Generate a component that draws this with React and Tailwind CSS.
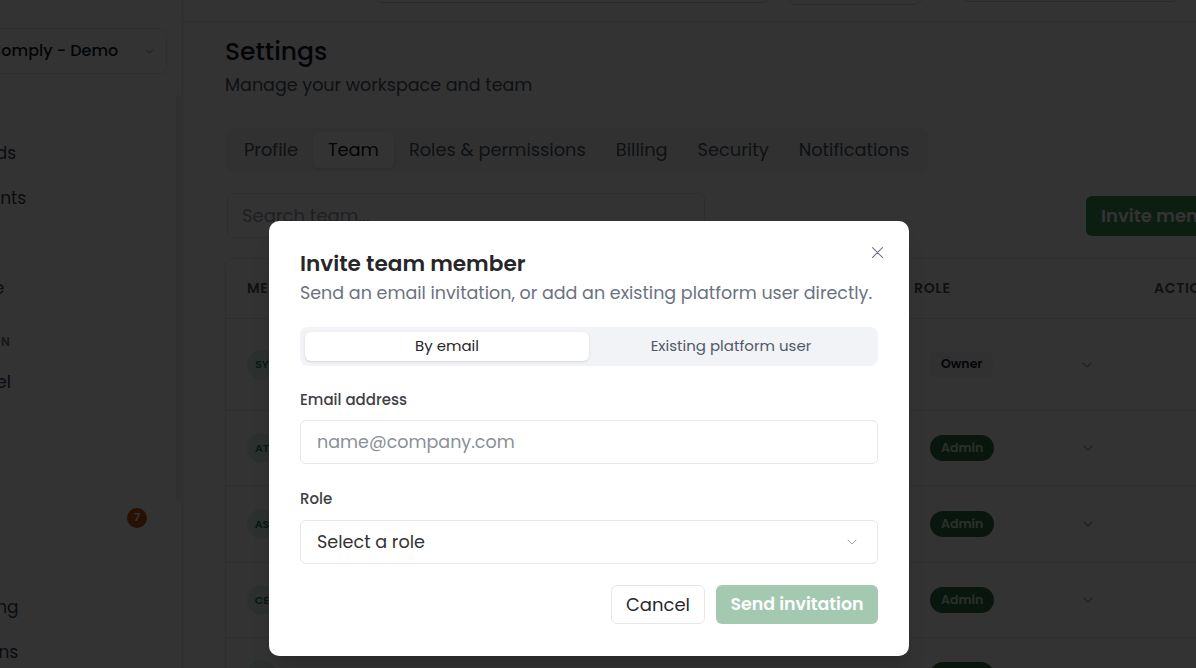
import React from "react";

const font = { fontFamily: "Poppins, Inter, 'Noto Sans', sans-serif" };

function Chevron({ className = "", size = 14, stroke = 1.6 }) {
  return (
    <svg width={size} height={size} viewBox="0 0 24 24" fill="none" stroke="currentColor" strokeWidth={stroke} strokeLinecap="round" strokeLinejoin="round" className={className}>
      <path d="M6 9l6 6 6-6" />
    </svg>
  );
}

const navTop = [
  { label: "Standards" },
  { label: "Documents" },
  { label: "Risks" },
  { label: "Evidence" },
];
const navBottom = [
  { label: "Personnel" },
  { label: "Vendors" },
  { label: "Audits" },
  { label: "Tasks", badge: 7 },
  { label: "Policies" },
  { label: "Monitoring" },
  { label: "Exceptions" },
];

function NavItem({ label, badge }) {
  return (
    <div className="flex h-[45px] items-center gap-3 pl-[12px] pr-[35px]">
      <span className="w-[20px] h-[20px] rounded bg-gray-200 shrink-0" />
      <span className="flex-1 text-[17px] text-gray-700">{label}</span>
      {badge ? (
        <span className="w-[20px] h-[20px] rounded-full bg-[#c2540a] text-white text-[11px] font-semibold flex items-center justify-center">{badge}</span>
      ) : null}
    </div>
  );
}

function Sidebar() {
  return (
    <aside className="relative w-[299px] -ml-[116px] shrink-0 border-r border-gray-200 bg-white">
      <div className="pl-[16px] pr-[15px] pt-[28px]">
        <div className="flex h-[46px] items-center gap-3 rounded-lg border border-gray-200 pl-[50px] pr-[10px]">
          <span className="w-[26px] h-[26px] rounded-md bg-[#2f7d4f] shrink-0" />
          <span className="flex-1 text-[16px] font-medium text-gray-900 whitespace-nowrap">Comply - Demo</span>
          <Chevron size={13} className="text-gray-500" />
        </div>
      </div>
      <div className="pt-[57px]">
        {navTop.map((n) => (
          <NavItem key={n.label} {...n} />
        ))}
        <div className="pl-[19px] pt-[22px] pb-[9px] text-[12px] font-semibold tracking-wider text-gray-500">
          CONFIGURATION
        </div>
        {navBottom.map((n) => (
          <NavItem key={n.label} {...n} />
        ))}
      </div>
      <div className="absolute right-[1px] top-[95px] h-[405px] w-[5px] rounded-full bg-gray-200/70" />
    </aside>
  );
}

function Header() {
  return (
    <div className="-mt-[42px] h-[64px] border-b border-gray-200 flex items-center gap-[18px] pl-[192px]">
      <div className="h-[40px] w-[395px] rounded-lg border border-gray-300 -mt-[13px]" />
      <div className="h-[40px] w-[134px] rounded-lg border border-gray-300 -mt-[9px]" />
      <div className="ml-[20px] h-[40px] w-[220px] rounded-lg border border-gray-300 -mt-[15px]" />
    </div>
  );
}

const members = [
  { initials: "SY", role: "Owner", h: "h-[92px]" },
  { initials: "AT", role: "Admin", h: "h-[75px]" },
  { initials: "AS", role: "Admin", h: "h-[77px]" },
  { initials: "CE", role: "Admin", h: "h-[75px]" },
  { initials: "MK", role: "Admin", h: "h-[75px]" },
];

function Settings() {
  const tabs = ["Profile", "Team", "Roles & permissions", "Billing", "Security", "Notifications"];
  return (
    <div className="pl-[42px] pt-[14px] w-[1100px]">
      <h1 className="text-[25px] leading-[32px] font-medium text-gray-900">Settings</h1>
      <p className="mt-[4px] text-[17.5px] leading-[26px] text-gray-600">Manage your workspace and team</p>
      <div className="mt-[30px] inline-flex h-[44px] items-center rounded-lg bg-gray-100 p-[4px]">
        {tabs.map((t) => (
          <div key={t} className={`px-[15px] h-[36px] flex items-center rounded-md text-[17.8px] ${t === "Team" ? "bg-white text-gray-900 shadow-sm" : "text-gray-600"}`}>
            {t}
          </div>
        ))}
      </div>
      <div className="mt-[21px] flex items-center">
        <div className="ml-[2px] h-[45px] w-[478px] rounded-md border border-gray-200 flex items-center px-[14px] text-[18px] text-gray-400">Search team...</div>
        <div className="ml-[381px] h-[40px] rounded-md bg-[#3f8f5c] px-[15px] flex items-center text-[18px] font-semibold text-white whitespace-nowrap">Invite member</div>
      </div>
      <div className="mt-[20px] rounded-lg border border-gray-200">
        <div className="grid grid-cols-[688px_240px_1fr] h-[60px] items-center border-b border-gray-200 text-[14px] font-semibold tracking-wider text-gray-600">
          <div className="pl-[21px]">MEMBER</div>
          <div>ROLE</div>
          <div>ACTIONS</div>
        </div>
        {members.map((m) => (
          <div key={m.initials} className={`grid grid-cols-[688px_240px_1fr] ${m.h} items-center border-b border-gray-200`}>
            <div className="pl-[21px] flex items-center">
              <span className="w-[30px] h-[30px] rounded-full bg-[#dcefe3] text-[11px] font-semibold text-[#2f7d4f] flex items-center justify-center">{m.initials}</span>
            </div>
            <div className="flex items-center">
              <span className={`ml-[16px] px-[11px] h-[26px] flex items-center text-[12.5px] font-semibold ${m.role === "Owner" ? "bg-gray-100 text-gray-900 rounded-md" : "rounded-full bg-[#2f6e47] text-[#d5eadc]"}`}>{m.role}</span>
              <Chevron size={16} className="ml-[86px] text-gray-400" />
            </div>
            <div />
          </div>
        ))}
      </div>
    </div>
  );
}

function InviteDialog() {
  return (
    <div className="absolute left-[269px] top-[221px] w-[640px] rounded-[10px] bg-white px-[31px] pt-[28px] pb-[32px] shadow-xl">
      <button className="absolute right-[23px] top-[23px] text-gray-500">
        <svg width="17" height="17" viewBox="0 0 24 24" fill="none" stroke="currentColor" strokeWidth="1.5" strokeLinecap="round">
          <path d="M5 5l14 14M19 5L5 19" />
        </svg>
      </button>
      <h2 className="text-[21.6px] leading-[29px] font-semibold text-[#27272a]">Invite team member</h2>
      <p className="mt-[3px] text-[17.5px] leading-[24px] text-[#6b7280]">Send an email invitation, or add an existing platform user directly.</p>
      <div className="mt-[22px] grid grid-cols-2 rounded-lg bg-[#f1f3f7] p-[5px]">
        <div className="h-[29px] flex items-center justify-center rounded-md bg-white shadow-sm text-[15px] text-[#27272a]">By email</div>
        <div className="h-[29px] flex items-center justify-center text-[15px] text-[#525866]">Existing platform user</div>
      </div>
      <div className="mt-[24px] text-[15px] leading-[20px] font-medium text-[#3f3f46]">Email address</div>
      <div className="mt-[10px] h-[44px] rounded-md border border-gray-200 flex items-center px-[16px] text-[17.5px] text-[#8a8f98]">name@company.com</div>
      <div className="mt-[25px] text-[15px] leading-[20px] font-medium text-[#3f3f46]">Role</div>
      <div className="mt-[11px] h-[44px] rounded-md border border-gray-200 flex items-center pl-[16px] pr-[17px] text-[17.6px] text-[#333]">
        <span className="flex-1">Select a role</span>
        <Chevron size={16} stroke={1.4} className="text-gray-400" />
      </div>
      <div className="mt-[21px] flex justify-end gap-[11px]">
        <div className="h-[39px] w-[94px] rounded-md border border-gray-200 flex items-center justify-center text-[18px] text-[#27272a]">Cancel</div>
        <div className="h-[39px] w-[162px] rounded-md bg-[#a4c9b1] flex items-center justify-center text-[17.4px] font-semibold text-white">Send invitation</div>
      </div>
    </div>
  );
}

export default function App() {
  return (
    <div className="relative h-[668px] w-[1196px] overflow-hidden bg-white" style={font}>
      <div className="flex h-full">
        <Sidebar />
        <main className="flex-1 min-w-0">
          <Header />
          <Settings />
        </main>
      </div>
      <div className="absolute inset-0 bg-black/80" />
      <InviteDialog />
    </div>
  );
}
